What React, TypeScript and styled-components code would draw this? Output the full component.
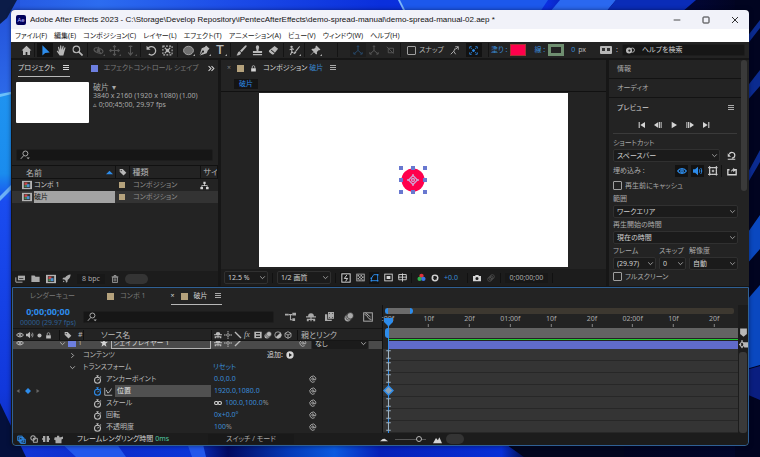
import React from "react";
import styled, { createGlobalStyle, css } from "styled-components";

const c = {
  panel: "#232323",
  gap: "#161616",
  field: "#161616",
  line: "#3a3a3a",
  text: "#aaaaaa",
  bright: "#d4d4d4",
  dim: "#7a7a7a",
  blue: "#2d8ceb",
  value: "#3a8cd8",
  sand: "#b5a27c",
  violet: "#6d7fe0",
  pink: "#ff004c",
};

const GlobalStyle = createGlobalStyle`
  *, *::before, *::after { box-sizing: border-box; }
  body {
    margin: 0;
    background: #06124a;
    font-family: "Noto Sans", "Noto Sans CJK JP", sans-serif;
    font-size: 7px;
    line-height: 12px;
    color: ${c.text};
    font-feature-settings: "palt";
  }
  button, input, select {
    font: inherit;
    color: inherit;
    background: none;
    border: 0;
    padding: 0;
    margin: 0;
    min-width: 0;
    font-feature-settings: inherit;
  }
  table { border-collapse: collapse; }
`;

/* ---------- icons (12 × 12 grid) ---------- */

const st = { fill: "none", stroke: "currentColor", strokeWidth: 1.2 };

const glyphs: Record<string, React.ReactNode> = {
  home: <path d="M6 .8 .6 6h1.6v5h2.9V7.6h1.8V11h2.9V6h1.6z" />,
  arrow: <path d="M2.6.4v11l3-2.8 5-.5z" />,
  hand: <path d="M4 11.5 1 7.2c-.5-.9.5-1.4 1.2-.7l1 1L2.2 2.6c-.1-.9 1-1 1.2-.2l.9 3L4.5 1c0-.9 1.2-.9 1.3 0l.2 4.2L7.2 1.3c.3-.8 1.3-.6 1.2.3l-.7 4 1.5-2.7c.4-.7 1.4-.3 1.1.5L8.9 8.2 8 11.5z" />,
  zoom: <g {...st}><circle cx="4.8" cy="4.8" r="3.6" /><path d="m7.5 7.5 4 4" strokeWidth="1.8" /></g>,
  orbit: <g {...st}><ellipse cx="6" cy="6" rx="5" ry="2.6" transform="rotate(20 6 6)" /><path d="M6 2v4l3 4" /><circle cx="6" cy="6" r="1.4" fill="currentColor" /></g>,
  move: <g {...st}><path d="M6 1v10M1 6h10" /><path d="M4.4 2.4 6 .8l1.6 1.6M4.4 9.6 6 11.2l1.6-1.6M2.4 4.4.8 6l1.6 1.6M9.6 4.4 11.2 6 9.6 7.6" /></g>,
  dolly: <g {...st}><path d="M6 .5V11M3.5 8 6 11l2.5-3M4 1.5h4" /></g>,
  rotate: <g><path d="M2.3 3.5A4.6 4.6 0 1 1 3 9.9" {...st} strokeWidth="1.4" /><path d="M.6.8v4.4H5z" /></g>,
  anchorBox: <g {...st} strokeDasharray="2 1.4"><rect x="1" y="1.2" width="10" height="9.6" /><path d="m3 3 6 6m0-6L3 9" strokeDasharray="none" /><circle cx="6" cy="6" r="1.3" fill="currentColor" strokeDasharray="none" /></g>,
  ellipse: <ellipse cx="6" cy="6" rx="5.4" ry="4.6" fill="#707070" stroke="#a8a8a8" />,
  pen: <path d="M7.8.5 11.5 4 9.7 5.6 8.4 9 1 11.5l2.9-3.3a1.2 1.2 0 1 0-.7-.7L.6 10.8 3 3.6 6.3 2.2z" />,
  brush: <path d="M11.3.5c.6.4.4 1-.1 1.6L6.2 8 4.4 6.3 9.8.9c.6-.6 1-.7 1.5-.4zM3.8 6.8l1.7 1.6C5.2 10.6 3.1 11.6.5 11.3c1.3-.9 1-3.8 3.3-4.5z" />,
  stamp: <path d="M4.2 2.2a1.8 1.8 0 1 1 3.6 0C7.8 3.8 7 4.2 7 6.6h4v2.2H1V6.6h4c0-2.4-.8-2.8-.8-4.4zM1 9.900h10v1.200H1z" />,
  eraser: <path d="M7.2 1 11 4.200 6.400 9.800c-.6.7-1.500.8-2.200.2L1.500 7.800c-.7-.6-.7-1.300-.1-2zM3.200 5.900l3.600 3 .6-.7-3.600-3z" fillRule="evenodd" />,
  roto: <g><path d="M11.300 1 7 6.200l1 1L12 2zM6.800 6.600l1.200 1c-.4 1.600-1.500 2.200-3.300 2.200 1-.7.8-2.500 2.100-3.200z" /><circle cx="2.800" cy="2" r="1.300" /><path d="M.7 5.200 3.400 4l1.800 1M3 4v3.500L1.500 11M3 7.300l1.800 1.200" {...st} /></g>,
  pin: <path d="M7 .6 11.400 5l-1 .8-1-.2-1.900 1.900.2 2-1 .9-2.500-2.500L.8 11.200l-.3-.4L3.900 7.400 1.500 5l1-1 2 .2L6.300 2.400 6 1.500z" />,
  axis: <g {...st}><path d="M6 6.500V1M6 6.500 1.500 10.500M6 6.500l4.500 4" /><path d="M4.800 2.200 6 .8l1.200 1.400M1 8.600v2.300h2.300M11 8.600v2.300H8.700" /></g>,
  axisBox: <g {...st}><path d="M3 3h7v6H3zM1 1l9 9" /></g>,
  snapArrow: <g {...st}><path d="m1 11 4-4 2-4M5 7l2.500 4M7 1h4v4M11 1 7.500 4.500" /></g>,
  snapBox: <g {...st}><path d="M1 3.500V1h2.500M8.500 1H11v2.500M11 8.500V11H8.500M3.500 11H1V8.500" /><path d="m3 3 1.500 1.500M9 3 7.500 4.500M3 9l1.500-1.500M9 9 7.500 7.500M6 4v4M4 6h4" /></g>,
  burger: <path d="M1.500 1.500h9V3h-9zM1.500 4.500h9V6h-9zM1.500 7.500h9V9h-9z" />,
  chevrons: <path d="m1 2 4 4-4 4M6 2l4 4-4 4" {...st} strokeWidth="1.800" />,
  lock: <g><path d="M2 5.500h8V11H2z" /><path d="M3.800 5.500V3.300a2.200 2.200 0 0 1 4.400 0v2.200" {...st} /></g>,
  search: <g {...st}><circle cx="6.500" cy="4.200" r="3" /><path d="M4.500 6.600 1 10.600" /><path d="M7.800 9h4l-2 2z" fill="currentColor" stroke="none" /></g>,
  tag: <path d="M1 1.500h4.500L11 7l-4.200 4.300L1 5.800zM3.300 3a.9.900 0 1 0 .1 1.800A.9.900 0 0 0 3.300 3z" fillRule="evenodd" />,
  tree: <path d="M4.500 1h3v3h-1v1.500H10V8h1.500v3h-3.500V8H9V6.600H3V8h1v3H.5V8H2V5.500h3.500V4h-1z" />,
  comp: <g><rect x="0" y="1" width="12" height="10" fill="#b4b4b4" /><rect x="2.200" y="2.500" width="7.600" height="7" fill="#333" /><rect x="3" y="3" width="3.500" height="3" fill="#c44" /><rect x="5.500" y="5" width="3.500" height="3.500" fill="#4a8fd0" /><rect x="3" y="6.300" width="2.500" height="2" fill="#4b9a55" /></g>,
  stack: <g><path d="M3.500 2H12v5.500H3.500z" /><path d="M1 9.500V4M1 9.800h8" {...st} /><path d="M5 5h5v1H5z" fill="#333" /></g>,
  folder: <path d="M.5 2h4.200l1.300 1.600h5.500v6.900H.5z" />,
  rocket: <path d="M11.500.5C8 .8 5.800 2.300 4.300 4.500L1.500 5 .5 7l2.600.200L5 9l.200 2.500 2-1 .4-2.800C9.900 6.200 11.200 4 11.500.5zM1 11l2.500-.8L2 8.600z" />,
  trash: <g {...st}><path d="M2.300 3.300h7.400v8H2.300zM1 2.800h10M4.500 2.500v-1.700h3v1.700M4.800 5v4.600M7.200 5v4.600" /></g>,
  chevron: <path d="m2 4 4 4 4-4" {...st} strokeWidth="1.500" />,
  chevronR: <path d="m4 2 4 4-4 4" {...st} strokeWidth="1.500" />,
  fast: <g {...st}><rect x="1" y="1" width="10" height="10" /><path d="M7 2.500 4 6.500h4L5.500 10" /></g>,
  checker: <g><rect x="1" y="1.500" width="10" height="9" {...st} /><path d="M2 2.500h2v2H2zM6 2.500h2v2H6zM4 4.500h2v2H4zM8 4.500h2v2H8zM2 6.500h2v2H2zM6 6.500h2v2H6zM4 8.500h2v1.500H4zM8 8.500h2v1.500H8z" /></g>,
  maskPath: <g {...st}><path d="M1.800 10.200V7L5 2.200h5.200v8z" /><path d="M.8 9.200h2v2h-2zM9.200 1.200h2v2h-2zM9.200 9.200h2v2h-2zM.8 6h2v2h-2z" fill="currentColor" stroke="none" /></g>,
  region: <g><rect x="1" y="1.500" width="10" height="9" {...st} /><rect x="3.500" y="4" width="5" height="4" /></g>,
  grid: <g {...st}><path d="M1 2h10v7H1zM6 .5v11M0 5.500h12" /></g>,
  rgb: <g><circle cx="6" cy="3.800" r="2.900" fill="#e0323c" /><circle cx="3.500" cy="7.800" r="2.900" fill="#2fb04a" /><circle cx="8.500" cy="7.800" r="2.900" fill="#3c74e6" /></g>,
  aperture: <g {...st} strokeWidth="2"><circle cx="6" cy="6" r="4.200" /><path d="M6 1.500 8 4M10.500 5 8.500 7.500M9 10 6 9M3.500 9.800 4 7M1.500 5 4 5" strokeWidth="1" /></g>,
  camera: <path d="M0 3h3l1-1.500h4L9 3h3v8H0zM6 4.500a2.300 2.300 0 1 0 0 4.600 2.300 2.300 0 0 0 0-4.600z" fillRule="evenodd" />,
  blurs: <g {...st}><circle cx="4" cy="8" r="3" /><circle cx="6" cy="6" r="3" /><circle cx="8" cy="4" r="3" /></g>,
  blursFill: <g><circle cx="4.500" cy="7.500" r="3.800" /><circle cx="6" cy="6" r="3.800" stroke="#232323" strokeWidth=".7" /><circle cx="7.500" cy="4.500" r="3.800" stroke="#232323" strokeWidth=".7" /></g>,
  first: <path d="M1 1.500h1.600v9H1zM10.500 1.500v9L3.500 6z" />,
  prev: <path d="M6.500 1.500v9L0 6zM7.500 1.500h1.400v9H7.500zM10 1.500h1.400v9H10z" />,
  play: <path d="M2.500 1v10l8-5z" />,
  next: <path d="M5.500 1.500v9L12 6zM3.100 1.500h1.400v9H3.100zM.6 1.500H2v9H.6z" />,
  last: <path d="M9.400 1.500H11v9H9.400zM1.500 1.500v9L8.500 6z" />,
  eye: <g {...st} strokeWidth="1.500"><path d="M.8 6C3 2.300 9 2.300 11.200 6 9 9.700 3 9.700.8 6z" /><circle cx="6" cy="6" r="1.500" /></g>,
  speaker: <g><path d="M0 4h2.500L6 1v10L2.500 8H0z" /><path d="M7.500 4c.8 1.200.8 2.800 0 4M9.300 2.500c1.500 2 1.500 5 0 7" {...st} /></g>,
  overlay: <g {...st}><rect x="2" y="2" width="8" height="8" /><path d="M0 2h12M0 10h12M2 0v12M10 0v12" strokeDasharray="1.500 1" /><path d="M6 4.500v3M4.500 6h3" /></g>,
  reset: <g><path d="M3 4.500A3.800 3.800 0 1 1 6.500 9.500" {...st} strokeWidth="1.600" /><path d="M1 3v4.500h4.300zM1 10.200h10v1.300H1z" /></g>,
  share: <g><path d="M3 4.500H1v6h10v-6H9" {...st} strokeWidth="1.600" /><path d="M5 8c0-3 .5-4 2.500-4V2l3 2.800-3 2.700v-2C6 5.500 5.500 6.500 5 8z" /></g>,
  flow: <g><path d="M0 3h4v2H0zM8 2h4v3H8zM8 8h3v3H8z" /><path d="M4 4h4M6 4v5.500h2" {...st} /></g>,
  shy: <path d="M2.500 5a3.500 3.500 0 0 1 7 0H12v1.500H6.700V8H11v3H8.700V9.500h-2V11H5.300V9.500h-2V11H1V8h4.300V6.500H0V5z" />,
  film: <path d="M4 0h8v9H4zM5.200 1.200v1.200h1.200V1.200zM9.600 1.200v1.200h1.200V1.200zM5.200 6.600v1.200h1.200V6.600zM9.600 6.600v1.200h1.200V6.600zM0 3h3v7.200h6V12H0z" fillRule="evenodd" />,
  graph: <g {...st}><rect x=".8" y="1" width="10.400" height="10" /><path d="M2 3c4 0 3 6 8 6M3 1l6 5" /></g>,
  dot: <circle cx="6" cy="6" r="3.500" />,
  sun: <g><circle cx="6" cy="6" r="2" {...st} /><path d="M5.300 0h1.400v2.400H5.300zM5.300 9.600h1.400V12H5.300zM0 5.300h2.400v1.400H0zM9.600 5.300H12v1.400H9.600z" /></g>,
  slash: <path d="m1.500 1.500 9 9" {...st} strokeWidth="2" />,
  slashUp: <path d="m1.500 10.500 9-9" {...st} strokeWidth="2" />,
  filmBox: <path d="M.5 1h11v10H.5zM3 3v2h6V3zM3 7v2h6V7z" fillRule="evenodd" />,
  half: <g><circle cx="6" cy="6" r="4.800" {...st} /><path d="M9.400 2.600a4.800 4.800 0 0 1-6.800 6.800z" /></g>,
  cube: <g {...st}><path d="M6 1 10.500 3.500v5L6 11 1.500 8.500v-5zM1.500 3.500 6 6l4.500-2.500M6 6v5" /></g>,
  star: <path d="m6 0 1.500 4.200H12L8.400 7l1.400 4.700L6 9l-3.800 2.700L3.600 7 0 4.200h4.500z" />,
  watch: <g {...st} strokeWidth="1.400"><circle cx="6" cy="7" r="4" /><path d="M4.500.9h3M6 1v2M6 7l1.500-1.500M9.500 2l1.200 1.200" /></g>,
  curve: <path d="M1 1v10h10M3 4l2 4 2-1 3-5" {...st} />,
  whip: <path d="M7.500 6A1.700 1.700 0 1 1 6 4.300c1.600 0 1.600 3.700 3 3.500 1.300-.3 1.500-2.500.8-4A4.600 4.600 0 1 0 8.500 10" {...st} strokeWidth="1.300" />,
  link: <g {...st} strokeWidth="1.600"><rect x=".8" y="3.800" width="5.200" height="4.400" rx="2.200" /><rect x="6" y="3.800" width="5.200" height="4.400" rx="2.200" /></g>,
  diamond: <path d="m6 1.500 4.500 4.500L6 10.500 1.500 6z" />,
  left: <path d="M9 2v8L3 6z" />,
  right: <path d="M3 2v8l6-4z" />,
  up: <path d="M0 9 6 3l6 6z" />,
  circlePlay: <path d="M6 .5a5.500 5.500 0 1 0 0 11 5.500 5.500 0 0 0 0-11zM4.500 3v6L9 6z" fillRule="evenodd" />,
  layers: <g {...st}><path d="M1 1.500h6v6H1zM3 3.500h6v6H3zM5 5.500h6v6H5z" strokeWidth="1.300" /></g>,
  circles: <g {...st} strokeWidth="1.600"><circle cx="4.500" cy="4.500" r="3.300" /><rect x="5" y="5" width="6" height="6" rx="1" /></g>,
  brackets: <path d="M1.500 1.500H5v9H1.500V7H0V5h1.500zM7 1.500h3.500V5H12v2h-1.500v3.500H7z" />,
  teapot: <path d="M1 3h3V1h3v2h2l3-1v3L10 6v5H2V7L0 6z" />,
  hillS: <path d="M0 9.500 4 6l3-.5L12 9.500z" />,
  hillL: <path d="M0 11 4 4l2.500 3L8.500 3 12 11z" />,
  marker: <path d="M1.500.5h9V8L6 11.500 1.500 8z" />,
  bin: <g><path d="M5 3h7v7H7z" /><path d="M4 2 1 6l3 4 3-4zM4 0v3M0 6h3" {...st} strokeWidth="1.500" /></g>,
  ibeam: <path d="M3 1h6M3 11h6M6 1v10" fill="none" stroke="#9fb4c4" strokeWidth="1.400" />,
  bubbles: <g><rect x="0" y="2" width="12" height="8" rx="1" /><path d="M2 4h3v3H2zM7 4h3v3H7z" fill="#333" /></g>,
  magnify: <g><circle cx="4" cy="6" r="4" /><circle cx="8.500" cy="5.500" r="2.800" {...st} /><circle cx="4.500" cy="6" r="1.500" fill="#222" /></g>,
  min: <path d="M1 6h10" {...st} />,
  max: <rect x="1.500" y="1.500" width="9" height="9" rx="1" {...st} strokeWidth="1.400" />,
  close: <path d="m1.500 1.500 9 9m0-9-9 9" {...st} strokeWidth="1.400" />,
};

const Svg = styled.svg<{ $s: number; $c?: string }>`
  display: block;
  flex: none;
  width: ${(p) => p.$s}px;
  height: ${(p) => p.$s}px;
  color: ${(p) => p.$c || "inherit"};
  fill: currentColor;
`;
const Icon = ({ n, s = 8, color }: { n: string; s?: number; color?: string }) => (
  <Svg viewBox="0 0 12 12" $s={s} $c={color} aria-hidden="true">{glyphs[n]}</Svg>
);

/* ---------- desktop and window frame ---------- */

const Desktop = styled.div`
  position: relative;
  min-height: 100vh;
  padding: 10px 11px 11px;
  display: flex;
  overflow: hidden;
`;
const Wallpaper = styled.svg`
  position: absolute;
  inset: 0;
  width: 100%;
  height: 100%;
`;
const AppWindow = styled.main`
  position: relative;
  flex: 1;
  min-width: 0;
  display: flex;
  flex-direction: column;
  background: ${c.gap};
  border-radius: 4px;
  overflow: hidden;
  box-shadow: 0 0 4px rgba(0, 0, 20, 0.5);
`;
const TitleBar = styled.header`
  display: flex;
  align-items: center;
  height: 19px;
  padding: 0 10px 0 5px;
  gap: 4px;
  background: #f1f2f9;
  color: #222;
  white-space: nowrap;
`;
const AeBadge = styled.span`
  width: 10px;
  height: 10px;
  border-radius: 2px;
  background: #00005b;
  color: #b9b9ff;
  font-size: 6px;
  line-height: 10px;
  text-align: center;
`;
const Title = styled.h1`
  margin: 0;
  flex: 1;
  min-width: 0;
  overflow: hidden;
  color: #111;
  font-family: "Liberation Sans", sans-serif;
  font-size: 8px;
  font-weight: 400;
`;
const Captions = styled.div`
  display: flex;
  gap: 21px;
`;
const Bare = styled.button<{ $w?: number; $on?: boolean; $dim?: boolean }>`
  display: flex;
  align-items: center;
  justify-content: center;
  flex: none;
  height: 12px;
  width: ${(p) => (p.$w ? p.$w + "px" : "auto")};
  background: ${(p) => (p.$on ? "#121212" : "none")};
  ${(p) => p.$dim && css`opacity: 0.35;`}
`;
const MenuBar = styled.nav`
  display: flex;
  align-items: center;
  height: 13px;
  padding: 0 4px;
  gap: 7px;
  background: #fff;
  color: #222;
  white-space: nowrap;
`;

/* ---------- toolbar ---------- */

const ToolBar = styled.div`
  display: flex;
  align-items: center;
  height: 16px;
  padding: 0 4px 0 7px;
  background: ${c.panel};
  color: #b8b8b8;
  white-space: nowrap;
`;
const ToolGroup = styled.div<{ $gap?: number }>`
  display: flex;
  align-items: center;
  flex: none;
  height: 14px;
  padding: 0 2px;
  border-left: 1px solid #141414;
  gap: ${(p) => p.$gap || 0}px;
  &:first-child { border-left: 0; padding: 0; }
`;
const PlainGroup = styled(ToolGroup)`
  border-left: 0;
  padding: 0;
`;
const ToolButton = styled(Bare)`
  position: relative;
  width: 16px;
  height: 14px;
`;
const Corner = styled.i`
  position: absolute;
  right: 1px;
  bottom: 1px;
  border: 1px solid transparent;
  border-right-color: #aaa;
  border-bottom-color: #aaa;
`;
const Spring = styled.div`
  flex: 1 1 0;
`;
const Gap = styled.div<{ $w: number }>`
  flex: none;
  width: ${(p) => p.$w}px;
`;
const Swatch = styled.button<{ $stroke?: boolean }>`
  width: 16px;
  height: 12px;
  background: ${(p) => (p.$stroke ? "#222" : c.pink)};
  border: ${(p) => (p.$stroke ? "3px solid #6f8f70" : "1px solid #a33")};
`;
const Blue = styled.span`
  color: ${c.value};
`;
const Lit = styled.span`
  color: ${c.bright};
`;
const CheckLabel = styled.label<{ $h?: number }>`
  display: flex;
  align-items: center;
  gap: 3px;
  height: ${(p) => p.$h || 12}px;
  white-space: nowrap;
`;
const Check = styled.input.attrs({ type: "checkbox" })`
  appearance: none;
  flex: none;
  width: 9px;
  height: 9px;
  border: 1px solid #a0a0a0;
  border-radius: 1px;
`;
const SearchField = styled.label<{ $w?: number }>`
  display: flex;
  align-items: center;
  flex: none;
  gap: 7px;
  height: 12px;
  padding: 0 3px;
  width: ${(p) => (p.$w ? p.$w + "px" : "auto")};
  background: ${c.field};
  border: 1px solid #1d1d1d;
  border-radius: 2px;
  input {
    flex: 1;
    width: 0;
    height: 10px;
    outline: none;
  }
  input::placeholder { color: #d0d0d0; opacity: 1; }
`;

/* ---------- panels ---------- */

const Workspace = styled.div`
  flex: 1;
  min-height: 0;
  display: grid;
  grid-template-columns: 206px minmax(0, 1fr) 140px;
  gap: 3px;
  padding: 2px 0 1px 1px;
`;
const Panel = styled.section`
  display: flex;
  flex-direction: column;
  min-width: 0;
  min-height: 0;
  overflow: hidden;
  background: ${c.panel};
`;
const Tabs = styled.div`
  display: flex;
  align-items: center;
  flex: none;
  height: 17px;
  white-space: nowrap;
`;
const Tab = styled.div<{ $on?: boolean; $pad?: number }>`
  display: flex;
  align-items: center;
  gap: 6px;
  height: 16px;
  margin-left: ${(p) => p.$pad || 0}px;
  color: ${(p) => (p.$on ? c.bright : c.dim)};
  border-bottom: ${(p) => (p.$on ? "1px solid #b8b8b8" : "1px solid transparent")};
`;
const ColorChip = styled.i<{ $c: string; $s?: number }>`
  flex: none;
  width: ${(p) => p.$s || 7}px;
  height: ${(p) => p.$s || 7}px;
  background: ${(p) => p.$c};
`;
const CompInfo = styled.div`
  display: flex;
  flex: none;
  gap: 4px;
  padding: 5px 4px 26px;
  line-height: 9px;
  white-space: nowrap;
  color: #a8a8a8;
`;
const Thumb = styled.div`
  width: 73px;
  height: 41px;
  background: #fff;
  border-radius: 1px;
`;
const InfoTitle = styled.div`
  display: flex;
  align-items: center;
  gap: 3px;
  font-size: 8px;
`;
const SearchWrap = styled.div`
  padding: 0 5px 4px 4px;
`;
const Table = styled.table`
  width: 100%;
  table-layout: fixed;
  th, td {
    height: 12px;
    padding: 0;
    font-weight: 400;
    text-align: left;
    white-space: nowrap;
    overflow: hidden;
  }
  th {
    font-size: 8px;
    color: #b8b8b8;
    border: 1px solid #111;
    border-left: 0;
  }
  th + th { padding-left: 3px; }
  td:nth-child(2), td:nth-child(3) { padding-left: 4px; }
  td { color: #8e8e8e; }
`;
const ItemRow = styled.tr<{ $on?: boolean }>`
  background: ${(p) => (p.$on ? "#333" : "none")};
`;
const NameCell = styled.div<{ $on?: boolean }>`
  display: flex;
  align-items: center;
  gap: 2px;
  padding-left: 10px;
  color: #c8c8c8;
  span {
    flex: 1;
    ${(p) => p.$on && css`background: #a3a3a3; color: #101010;`}
  }
`;
const HeadCell = styled.div`
  display: flex;
  align-items: center;
  justify-content: space-between;
  padding: 0 2px 0 14px;
  line-height: 11px;
`;
const PanelFooter = styled.div<{ $gap?: number; $h?: number }>`
  display: flex;
  align-items: center;
  flex: none;
  gap: ${(p) => p.$gap || 7}px;
  height: ${(p) => p.$h || 15}px;
  padding: 0 3px;
  background: #1c1c1c;
  white-space: nowrap;
`;
const Pill = styled.i<{ $w: number }>`
  width: ${(p) => p.$w}px;
  height: 10px;
  border-radius: 5px;
  background: #343434;
`;
const Depth = styled.button<{ $w: number }>`
  width: ${(p) => p.$w}px;
  height: 10px;
  line-height: 10px;
  background: #181818;
`;

/* ---------- composition viewer ---------- */

const Crumbs = styled.div`
  flex: none;
  height: 15px;
  padding: 2px 13px 0;
  border-bottom: 1px solid #111;
  button {
    display: block;
    width: 24px;
    height: 10px;
    line-height: 10px;
    background: #141414;
    color: ${c.blue};
  }
`;
const Viewer = styled.div`
  flex: 1;
  min-height: 0;
  padding: 1px 0 2px;
  display: flex;
  justify-content: center;
`;
const Canvas = styled.div`
  height: 100%;
  aspect-ratio: 16 / 9;
  background: #fff;
  display: flex;
  align-items: center;
  justify-content: center;
`;
const Divider = styled.i<{ $h?: number }>`
  flex: none;
  width: 1px;
  height: ${(p) => p.$h || 10}px;
  background: #111;
`;

/* ---------- preview panel ---------- */

const Side = styled(Panel)`
  display: grid;
  grid-template-columns: minmax(0, 1fr) 8px;
`;
const SideBody = styled.div`
  min-width: 0;
`;
const SideTab = styled.button`
  display: flex;
  align-items: center;
  justify-content: space-between;
  width: 100%;
  height: 19px;
  padding: 0 6px 0 8px;
  border-bottom: 1px solid #131313;
`;
const Heading = styled(SideTab)`
  border: 0;
  color: ${c.bright};
`;
const Transport = styled.div`
  display: flex;
  justify-content: center;
  gap: 7px;
  height: 17px;
  margin: 0 4px;
  padding-right: 2px;
  align-items: center;
  color: ${c.bright};
  border-bottom: 1px solid ${c.line};
`;
const Form = styled.div`
  padding: 2px 3px 0 4px;
`;
const Field = styled.label<{ $w?: number }>`
  display: block;
  min-width: 0;
  flex: ${(p) => (p.$w ? `0 0 ${p.$w}px` : "1")};
  line-height: 13px;
  white-space: nowrap;
`;
const Line = styled.div<{ $gap?: number; $h?: number }>`
  display: flex;
  align-items: center;
  justify-content: space-between;
  gap: ${(p) => p.$gap || 0}px;
  min-height: ${(p) => p.$h || 13}px;
`;
const SelectBox = styled.span<{ $w?: number }>`
  position: relative;
  display: flex;
  flex: ${(p) => (p.$w ? "none" : "1")};
  width: ${(p) => (p.$w ? p.$w + "px" : "auto")};
  height: 13px;
  align-items: center;
  select {
    appearance: none;
    width: 100%;
    height: 13px;
    padding: 0 9px 0 3px;
    line-height: 11px;
    color: #d0d0d0;
    background: #1b1b1b;
    border: 1px solid #303030;
    border-radius: 2px;
    text-overflow: clip;
  }
  svg {
    position: absolute;
    right: 2px;
    pointer-events: none;
  }
`;
const Select = ({ v, w, label }: { v: string; w?: number; label: string }) => (
  <SelectBox $w={w}>
    <select aria-label={label} defaultValue={v}><option>{v}</option></select>
    <Icon n="chevron" s={7} />
  </SelectBox>
);
const ButtonRow = styled.div`
  display: flex;
  gap: 3px;
  color: ${c.bright};
`;
const ScrollThumb = styled.i<{ $h: string }>`
  display: block;
  width: 6px;
  height: ${(p) => p.$h};
  border-radius: 3px;
  background: #3a3a3a;
`;

/* ---------- timeline ---------- */

const Timeline = styled.section`
  flex: none;
  display: flex;
  flex-direction: column;
  margin-left: 1px;
  background: ${c.panel};
  border: 1px solid #2f6094;
  border-radius: 0 0 4px 4px;
`;
const Split = styled.div`
  display: grid;
  grid-template-columns: 370px minmax(0, 1fr) 10px;
`;
const Column = styled.div`
  position: relative;
  min-width: 0;
  display: flex;
  flex-direction: column;
`;
const Outline = styled(Column)`
  border-right: 1px solid #111;
`;
const TimeTools = styled.div`
  display: flex;
  align-items: center;
  height: 23px;
  padding: 0 9px 0 5px;
  gap: 5px;
`;
const TimeIcons = styled.div`
  display: flex;
  flex: 1;
  justify-content: space-between;
  margin-left: 6px;
`;
const TimeCode = styled.button`
  flex: none;
  width: 60px;
  line-height: 9px;
  color: #2c5f94;
  strong {
    display: block;
    font-size: 9px;
    line-height: 12px;
    color: ${c.blue};
  }
`;
const LayerGrid = styled.div<{ $head?: boolean; $on?: boolean }>`
  display: grid;
  grid-template-columns: 46px 24px minmax(0, 1fr) 86px 85px;
  align-items: center;
  flex: none;
  height: ${(p) => (p.$head ? 13 : 12)}px;
  white-space: nowrap;
  color: #bababa;
  background: ${(p) => (p.$on ? "#4a4a4a" : "none")};
  ${(p) => p.$head && css`
    border-top: 1px solid #161616;
    border-bottom: 1px solid #161616;
  `}
`;
const Cell = styled.div<{ $gap?: number; $pad?: number; $end?: boolean; $rule?: boolean }>`
  display: flex;
  align-items: center;
  min-width: 0;
  gap: ${(p) => p.$gap || 0}px;
  padding-left: ${(p) => p.$pad || 0}px;
  justify-content: ${(p) => (p.$end ? "flex-end" : "flex-start")};
  height: 12px;
  ${(p) => p.$rule && css`height: 10px; border-left: 1px solid #111;`}
`;
const Clip = styled.div`
  display: flex;
  flex-direction: column;
  justify-content: flex-end;
  height: 8px;
  overflow: hidden;
`;
const LayerName = styled.span`
  flex: 1;
  height: 12px;
  line-height: 10px;
  padding-left: 1px;
  border: 1px solid #b4b4b4;
  color: ${c.bright};
`;
const HeadText = styled.span`
  font-size: 8px;
  line-height: 10px;
`;
const PropName = styled.span<{ $on?: boolean }>`
  padding: 0 2px;
  ${(p) => p.$on && css`flex: 1; background: #505050; color: #e0e0e0;`}
`;
const Value = styled.button`
  color: ${c.value};
`;
const Unit = styled.span`
  color: #909090;
`;
const Add = styled.button`
  display: flex;
  align-items: center;
  gap: 3px;
  padding-right: 3px;
  color: ${c.bright};
`;
const Navigator = styled.div`
  display: flex;
  height: 6px;
  margin: 3px 4px 0 2px;
  background: #3d3830;
  border-radius: 0 2px 2px 0;
`;
const NavView = styled.div`
  width: 28px;
  background: #6b6b6b;
  border: solid ${c.blue};
  border-width: 0 3px;
  border-radius: 3px;
`;
const Ruler = styled.div`
  position: relative;
  height: 14px;
  margin-left: 5px;
  line-height: 10px;
`;
const Tick = styled.span`
  position: absolute;
  top: 0;
  height: 13px;
  transform: translateX(-50%);
  &::after {
    content: "";
    display: block;
    width: 1px;
    height: 3px;
    margin: 0 auto;
    background: #888;
  }
`;
const WorkArea = styled.div`
  height: 10px;
  margin-left: 2px;
  background: #636363;
  border-left: 3px solid ${c.blue};
  border-radius: 3px 0 0 3px;
`;
const RenderedBar = styled.div`
  height: 1px;
  margin: 1px 0 1px 5px;
  background: #22c932;
`;
const LayerBar = styled.div`
  height: 8px;
  margin-left: 5px;
  background: #606bc9;
`;
const Track = styled.div`
  height: 12px;
  background: #343434;
  border-bottom: 1px solid #272727;
  display: flex;
  align-items: center;
`;
const Playhead = styled.svg`
  position: absolute;
  left: 0;
  top: 13px;
  width: 11px;
  height: calc(100% - 13px);
`;
const KeySlot = styled.span`
  position: relative;
  z-index: 1;
  width: 11px;
  display: flex;
  justify-content: center;
`;
const Rail = styled(Column)`
  align-items: center;
  padding-top: 23px;
  gap: 3px;
  color: #b8b8b8;
  background: #1c1c1c;
`;
const RailThumb = styled(ScrollThumb)`
  width: 8px;
  flex: 1;
`;
const Status = styled(PanelFooter)`
  padding: 0 4px;
  border-radius: 0 0 4px 4px;
`;
const StatusText = styled.span`
  flex: none;
  width: 137px;
  padding-left: 10px;
  color: #d0d0d0;
  em { font-style: normal; color: #4fc9a0; }
`;
const Mode = styled.button`
  width: 86px;
  height: 10px;
  line-height: 10px;
  margin-right: 82px;
  background: #191919;
`;
const ZoomRange = styled.input.attrs({ type: "range" })`
  appearance: none;
  width: 31px;
  height: 8px;
  margin: 0 3px;
  background: linear-gradient(#555, #555) center / 100% 1px no-repeat;
  &::-webkit-slider-thumb {
    appearance: none;
    width: 6px;
    height: 6px;
    border: 1px solid #b8b8b8;
    border-radius: 50%;
    background: #1c1c1c;
  }
`;

/* ---------- data ---------- */

const menus = ["ファイル(F)", "編集(E)", "コンポジション(C)", "レイヤー(L)", "エフェクト(T)", "アニメーション(A)", "ビュー(V)", "ウィンドウ(W)", "ヘルプ(H)"];

type Tool = { n: string; l: string; on?: boolean; dim?: boolean; more?: boolean };
const toolGroups: Tool[][] = [
  [{ n: "home", l: "ホーム" }],
  [{ n: "arrow", l: "選択", on: true }, { n: "hand", l: "手のひら" }, { n: "zoom", l: "ズーム" }],
  [{ n: "orbit", l: "周回", dim: true, more: true }, { n: "move", l: "パン", dim: true, more: true }, { n: "dolly", l: "ドリー", dim: true, more: true }],
  [{ n: "rotate", l: "回転" }, { n: "anchorBox", l: "アンカーポイント" }],
  [{ n: "ellipse", l: "楕円形", more: true }, { n: "pen", l: "ペン", more: true }, { n: "text", l: "文字", more: true }],
  [{ n: "brush", l: "ブラシ" }, { n: "stamp", l: "スタンプ" }, { n: "eraser", l: "消しゴム" }],
  [{ n: "roto", l: "ロトブラシ", more: true }],
  [{ n: "pin", l: "パペットピン", more: true }],
];
const TypeGlyph = styled.span`
  font-family: Roboto, sans-serif;
  font-size: 13px;
  font-weight: 500;
`;

const tickLabels = [":00f", "10f", "20f", "01:00f", "10f", "20f", "02:00f", "10f", "20f"];
const tickStep = 11.65;

type Prop = { name: string; value: string; unit?: string; on?: boolean; link?: boolean };
const props: Prop[] = [
  { name: "アンカーポイント", value: "0.0,0.0" },
  { name: "位置", value: "1920.0,1080.0", on: true },
  { name: "スケール", value: "100.0,100.0", unit: "%", link: true },
  { name: "回転", value: "0x+0.0°" },
  { name: "不透明度", value: "100", unit: "%" },
];

/* ---------- parts ---------- */

const DesktopArt = () => (
  <Wallpaper viewBox="0 0 760 457" preserveAspectRatio="none" aria-hidden="true">
    <defs>
      <linearGradient id="top" x1="0" x2="1">
        <stop offset="0" stopColor="#2456e0" /><stop offset=".13" stopColor="#2c6cf0" />
        <stop offset=".3" stopColor="#1c4ce8" /><stop offset=".5" stopColor="#0a2fdc" />
        <stop offset=".72" stopColor="#0b2ee0" /><stop offset=".8" stopColor="#030a58" /><stop offset="1" stopColor="#010318" />
      </linearGradient>
      <linearGradient id="left" x1="0" x2="0" y1="0" y2="1">
        <stop offset="0" stopColor="#2350d8" /><stop offset=".2" stopColor="#2c68e8" /><stop offset=".21" stopColor="#1f93f0" />
        <stop offset=".38" stopColor="#1a8cee" /><stop offset=".44" stopColor="#1a4cf0" /><stop offset=".85" stopColor="#1138dc" /><stop offset="1" stopColor="#0c2cb8" />
      </linearGradient>
      <linearGradient id="bottom" x1="0" x2="1">
        <stop offset="0" stopColor="#1238d8" /><stop offset=".15" stopColor="#0c2ccc" /><stop offset=".25" stopColor="#0a36d8" />
        <stop offset=".3" stopColor="#020a60" /><stop offset=".38" stopColor="#043ab8" /><stop offset=".44" stopColor="#0a5ae0" />
        <stop offset=".5" stopColor="#0620b8" /><stop offset=".66" stopColor="#0730d8" /><stop offset=".7" stopColor="#010318" /><stop offset="1" stopColor="#01062c" />
      </linearGradient>
    </defs>
    <rect width="760" height="228" fill="url(#top)" />
    <rect y="228" width="760" height="229" fill="url(#bottom)" />
    <rect width="20" height="457" fill="url(#left)" />
    <path d="M0 0h17L7 18l-7 6z" fill="#0b1c48" />
    <path d="M0 196 20 176v5L0 201z" fill="#6cb0f6" />
    <path d="M0 94 20 90v2L0 97z" fill="#6cc0fa" />
    <path d="M0 403 26 457H0z" fill="#04103c" />
    <path d="M398 0h150l-8 12H404z" fill="#1c58ec" />
    <path d="M398 0h2l6 12h-2z" fill="#7ab6fa" />
    <path d="M560 0h56l-10 12h-56z" fill="#2a68f0" />
    <path d="M616 0h80l-14 12h-76z" fill="#0a2cb8" />
    <path d="M735 0h25v457h-25z" fill="#010420" />
    <path d="m760 20-14 18v8l14-18zM760 70l-14 18v14l14-16zM760 150l-14 26v10l14-24z" fill="#0b2b90" />
    <path d="m760 215-14 20v30l14-16zM760 285l-14 16v68l14-4z" fill="#0a48c0" />
    <path d="m760 366-14 4v24l14 6z" fill="#0a1e80" />
    <path d="m58 440 18 17h50l-12-17zM186 440l6 17h14l-4-17z" fill="#2258ec" />
    <path d="m500 440 24 17h100v-17z" fill="#02061e" />
  </Wallpaper>
);

const Handles = () => {
  const pts = [0, 12, 24].flatMap((x) => [0, 12, 24].map((y) => [x, y])).filter(([x, y]) => x !== 12 || y !== 12);
  return (
    <svg width="30" height="30" viewBox="0 0 30 30" role="img" aria-label="破片">
      <circle cx="15" cy="15" r="11.500" fill={c.pink} />
      <g fill="none" stroke="#d0a0d0" strokeWidth="1.300">
        <path d="M15 10.500 19.500 15 15 19.500 10.500 15z" />
        <path d="M15 9v3M15 18v3M9 15h3M18 15h3" />
        <circle cx="15" cy="15" r="1.500" />
      </g>
      {pts.map(([x, y]) => <rect key={`${x}-${y}`} x={x + 1} y={y + 1} width="4" height="4" fill="#6878d0" />)}
    </svg>
  );
};

const ProjectPanel = () => (
  <Panel>
    <Tabs>
      <Tab $on $pad={6}>プロジェクト<Icon n="burger" s={8} /></Tab>
      <Tab $pad={21}><ColorChip $c={c.violet} />エフェクトコントロール シェイプ</Tab>
      <Spring />
      <Bare $w={14} aria-label="その他のタブ"><Icon n="chevrons" s={7} color={c.bright} /></Bare>
    </Tabs>
    <CompInfo>
      <Thumb />
      <div>
        <InfoTitle>破片 <span>▾</span></InfoTitle>
        <div>3840 x 2160 (1920 x 1080) (1.00)</div>
        <div>▵ 0;00;45;00, 29.97 fps</div>
      </div>
    </CompInfo>
    <SearchWrap>
      <SearchField><Icon n="search" s={10} /><input aria-label="プロジェクトを検索" /></SearchField>
    </SearchWrap>
    <Table>
      <colgroup><col width="103" /><col width="14" /><col width="71" /><col /></colgroup>
      <thead>
        <tr>
          <th><HeadCell>名前<Icon n="up" s={7} color={c.blue} /></HeadCell></th>
          <th aria-label="ラベル"><Icon n="tag" s={8} /></th>
          <th>種類</th>
          <th>サイ</th>
        </tr>
      </thead>
      <tbody>
        {["コンポ 1", "破片"].map((name, i) => (
          <ItemRow key={name} $on={i === 1}>
            <td><NameCell $on={i === 1}><Icon n="comp" s={10} /><span>{name}</span></NameCell></td>
            <td><ColorChip as="div" $c={c.sand} $s={6} /></td>
            <td>コンポジション</td>
            <td>{i === 0 && <Icon n="tree" s={9} color={c.bright} />}</td>
          </ItemRow>
        ))}
      </tbody>
    </Table>
    <Spring />
    <PanelFooter $gap={6}>
      <Bare aria-label="フッテージを変換"><Icon n="stack" s={10} /></Bare>
      <Bare aria-label="新規フォルダー"><Icon n="folder" s={9} /></Bare>
      <Bare aria-label="新規コンポジション"><Icon n="comp" s={10} /></Bare>
      <Bare aria-label="設定"><Icon n="rocket" s={9} /></Bare>
      <Depth $w={28}>8 bpc</Depth>
      <Bare aria-label="削除"><Icon n="trash" s={8} /></Bare>
      <Pill $w={23} />
    </PanelFooter>
  </Panel>
);

const CompositionPanel = () => (
  <Panel>
    <Tabs>
      <Tab $pad={6}>
        <span>×</span><ColorChip $c={c.sand} /><Icon n="lock" s={7} color={c.bright} />
      </Tab>
      <Tab $pad={6}>
        <Lit>コンポジション <Blue>破片</Blue></Lit><Icon n="burger" s={8} color={c.text} />
      </Tab>
    </Tabs>
    <Crumbs><button>破片</button></Crumbs>
    <Viewer><Canvas><Handles /></Canvas></Viewer>
    <PanelFooter $gap={4} $h={17}>
      <Select v="12.5 %" w={44} label="拡大率" />
      <Divider />
      <Select v="1/2 画質" w={54} label="解像度" />
      <Divider />
      <Bare $w={11} $on aria-label="高速プレビュー"><Icon n="fast" s={10} color={c.bright} /></Bare>
      <Bare $w={10} aria-label="透明グリッド"><Icon n="checker" s={9} /></Bare>
      <Bare $w={10} $on aria-label="マスクとシェイプのパス"><Icon n="maskPath" s={9} color={c.blue} /></Bare>
      <Bare $w={10} aria-label="目標範囲"><Icon n="region" s={9} color={c.bright} /></Bare>
      <Bare $w={10} aria-label="グリッド"><Icon n="grid" s={9} color={c.bright} /></Bare>
      <Divider />
      <Bare $w={10} aria-label="チャンネル"><Icon n="rgb" s={9} /></Bare>
      <Bare $w={10} aria-label="露出をリセット"><Icon n="aperture" s={8} color={c.bright} /></Bare>
      <Value>+0.0</Value>
      <Gap $w={1} />
      <Divider />
      <Bare $w={10} aria-label="スナップショット"><Icon n="camera" s={8} color={c.bright} /></Bare>
      <Bare $w={10} $dim aria-label="スナップショットを表示"><Icon n="blurs" s={8} /></Bare>
      <Divider />
      <Depth $w={43}>0;00;00;00</Depth>
      <Divider />
    </PanelFooter>
  </Panel>
);

const transport = [["first", "先頭"], ["prev", "前のフレーム"], ["play", "再生"], ["next", "次のフレーム"], ["last", "最後"]];

const PreviewPanel = () => (
  <Side>
    <SideBody>
      <SideTab>情報</SideTab>
      <SideTab>オーディオ</SideTab>
      <Heading>プレビュー<Icon n="burger" s={8} color={c.text} /></Heading>
      <Transport>
        {transport.map(([n, l]) => <Bare key={n} $w={9} aria-label={l}><Icon n={n} s={8} /></Bare>)}
      </Transport>
      <Form>
        <Field as="div">ショートカット</Field>
        <Line $gap={4}>
          <Select v="スペースバー" label="ショートカット" />
          <Bare $w={14} aria-label="リセット"><Icon n="reset" s={9} color={c.bright} /></Bare>
        </Line>
        <Line $h={17}>
          <Field as="div">埋め込み :</Field>
          <ButtonRow>
            <Bare $w={13} $on aria-label="ビデオ"><Icon n="eye" s={10} color={c.blue} /></Bare>
            <Bare $w={13} $on aria-label="オーディオ"><Icon n="speaker" s={10} color={c.blue} /></Bare>
            <Bare $w={11} aria-label="オーバーレイ"><Icon n="overlay" s={10} /></Bare>
            <Divider $h={12} />
            <Bare $w={13} aria-label="書き出し"><Icon n="share" s={10} /></Bare>
          </ButtonRow>
        </Line>
        <CheckLabel $h={13}><Check />再生前にキャッシュ</CheckLabel>
        <Field>範囲<Select v="ワークエリア" label="範囲" /></Field>
        <Field>再生開始の時間<Select v="現在の時間" label="再生開始の時間" /></Field>
        <Line $gap={3}>
          <Field $w={43}>フレーム<Select v="(29.97)" label="フレームレート" /></Field>
          <Field $w={27}>スキップ<Select v="0" label="スキップ" /></Field>
          <Field>解像度<Select v="自動" label="解像度" /></Field>
        </Line>
        <CheckLabel $h={13}><Check />フルスクリーン</CheckLabel>
      </Form>
    </SideBody>
    <ScrollThumb $h="58%" />
  </Side>
);

const switches = ["shy", "sun", "slash", "fx", "filmBox", "blursFill", "half", "cube"];
const Fx = styled.i`
  width: 8px;
  font: italic 8px/10px "Liberation Serif", serif;
`;

const TimelinePanel = () => (
  <Timeline>
    <Tabs>
      <Tab $pad={17}>レンダーキュー</Tab>
      <Tab $pad={32}><ColorChip $c={c.sand} />コンポ 1</Tab>
      <Tab $on $pad={25}><span>×</span><ColorChip $c={c.sand} />破片<Icon n="burger" s={8} color={c.text} /></Tab>
    </Tabs>
    <Split>
      <Outline>
        <TimeTools>
          <TimeCode><strong>0;00;00;00</strong>00000 (29.97 fps)</TimeCode>
          <SearchField $w={191}><Icon n="search" s={10} /><input aria-label="レイヤーを検索" /></SearchField>
          <TimeIcons>
            <Bare aria-label="フローチャート"><Icon n="flow" s={11} /></Bare>
            <Bare aria-label="シャイ"><Icon n="shy" s={10} /></Bare>
            <Bare aria-label="フレームブレンド"><Icon n="film" s={9} /></Bare>
            <Bare aria-label="モーションブラー"><Icon n="blursFill" s={10} /></Bare>
            <Bare aria-label="グラフエディター"><Icon n="graph" s={10} /></Bare>
          </TimeIcons>
        </TimeTools>
        <LayerGrid $head>
          <Cell $pad={3} $gap={2}><Icon n="eye" /><Icon n="speaker" /><Icon n="dot" s={7} /><Icon n="lock" s={7} /></Cell>
          <Cell $pad={4} $gap={6} $rule><Icon n="tag" /><span>#</span></Cell>
          <Cell $pad={17} $rule><HeadText>ソース名</HeadText></Cell>
          <Cell $pad={2} $gap={2} $rule>
            {switches.map((s) => (s === "fx" ? <Fx key={s}>fx</Fx> : <Icon key={s} n={s} />))}
          </Cell>
          <Cell $pad={3} $rule><HeadText>親とリンク</HeadText></Cell>
        </LayerGrid>
        <Clip>
          <LayerGrid $on>
            <Cell $pad={3}><Icon n="eye" /></Cell>
            <Cell $gap={2}><Icon n="chevron" s={7} /><ColorChip $c={c.violet} $s={8} /><span>1</span></Cell>
            <Cell $pad={17} $gap={3}><Icon n="star" color={c.bright} /><LayerName>シェイプレイヤー 1</LayerName></Cell>
            <Cell $pad={3} $gap={2}><Icon n="shy" /><Icon n="sun" /><Icon n="slashUp" /></Cell>
            <Cell $pad={2} $gap={4}><Icon n="whip" /><Select v="なし" w={58} label="親とリンク" /></Cell>
          </LayerGrid>
        </Clip>
        <LayerGrid>
          <Cell />
          <Cell $pad={10}><Icon n="chevronR" s={7} /></Cell>
          <Cell>コンテンツ</Cell>
          <Cell $end><Add>追加:<Icon n="circlePlay" s={8} /></Add></Cell>
          <Cell />
        </LayerGrid>
        <LayerGrid>
          <Cell />
          <Cell $pad={10}><Icon n="chevron" s={7} /></Cell>
          <Cell>トランスフォーム</Cell>
          <Cell $pad={2}><Value>リセット</Value></Cell>
          <Cell />
        </LayerGrid>
        {props.map((p) => (
          <LayerGrid key={p.name}>
            <Cell $pad={2} $gap={3}>
              {p.on && <><Icon n="left" s={6} color="#666" /><Icon n="diamond" s={8} color={c.blue} /><Icon n="right" s={6} color="#666" /></>}
            </Cell>
            <Cell />
            <Cell $pad={10} $gap={2}>
              <Icon n="watch" s={9} color={p.on ? c.blue : undefined} />
              {p.on && <Icon n="curve" s={9} />}
              <PropName $on={p.on}>{p.name}</PropName>
            </Cell>
            <Cell $pad={3}>
              {p.link && <><Icon n="link" s={8} color={c.bright} /><Gap $w={3} /></>}
              <Value>{p.value}</Value>
              {p.unit && <Unit>{p.unit}</Unit>}
            </Cell>
            <Cell $pad={12}><Icon n="whip" s={8} /></Cell>
          </LayerGrid>
        ))}
      </Outline>
      <Column>
        <Navigator><NavView /></Navigator>
        <Ruler>
          {tickLabels.map((t, i) => <Tick key={i} style={{ left: `${i * tickStep}%` }}>{t}</Tick>)}
        </Ruler>
        <WorkArea />
        <RenderedBar />
        <LayerBar />
        {[0, 1, 2, 3, 4, 5, 6].map((i) => (
          <Track key={i}>
            <KeySlot>
              {i === 3
                ? <svg width="11" height="11" viewBox="0 0 11 11"><path d="m5.500 1 4.500 4.500-4.500 4.500L1 5.500z" fill="#8da2b4" stroke={c.blue} strokeWidth="1.400" /></svg>
                : <Icon n="ibeam" s={9} />}
            </KeySlot>
          </Track>
        ))}
        <Playhead aria-hidden="true">
          <rect x="5" y="0" width="1" height="100%" fill={c.blue} />
          <path d="M1 0h9v4L5.500 8.500 1 4z" fill={c.blue} />
        </Playhead>
      </Column>
      <Rail>
        <Icon n="marker" s={9} />
        <Icon n="bin" s={9} />
        <RailThumb $h="auto" />
      </Rail>
    </Split>
    <Status $gap={4} $h={12}>
      <Bare aria-label="レイヤースイッチ"><Icon n="layers" s={9} color={c.blue} /></Bare>
      <Bare aria-label="転送制御"><Icon n="circles" /></Bare>
      <Bare aria-label="イン/アウト"><Icon n="brackets" /></Bare>
      <Bare aria-label="レンダリング時間"><Icon n="teapot" s={9} /></Bare>
      <StatusText>フレームレンダリング時間 <em>0ms</em></StatusText>
      <Mode>スイッチ / モード</Mode>
      <Icon n="hillS" s={8} color={c.bright} />
      <ZoomRange aria-label="ズーム" defaultValue={85} />
      <Icon n="hillL" s={9} color={c.bright} />
      <Pill $w={18} />
    </Status>
  </Timeline>
);

export default function App() {
  return (
    <>
      <GlobalStyle />
      <Desktop>
        <DesktopArt />
        <AppWindow>
          <TitleBar>
            <AeBadge>Ae</AeBadge>
            <Title>Adobe After Effects 2023 - C:\Storage\Develop Repository\iPentecAfterEffects\demo-spread-manual\demo-spread-manual-02.aep *</Title>
            <Captions>
              <Bare aria-label="最小化"><Icon n="min" s={8} /></Bare>
              <Bare aria-label="最大化"><Icon n="max" s={8} /></Bare>
              <Bare aria-label="閉じる"><Icon n="close" s={8} /></Bare>
            </Captions>
          </TitleBar>
          <MenuBar>{menus.map((m) => <button key={m}>{m}</button>)}</MenuBar>
          <ToolBar>
            {toolGroups.map((group, i) => (
              <ToolGroup key={i}>
                {group.map((t) => (
                  <ToolButton key={t.n} $on={t.on} $dim={t.dim} aria-label={t.l}>
                    {t.n === "text" ? <TypeGlyph>T</TypeGlyph> : <Icon n={t.n} s={11} color={t.on ? c.blue : undefined} />}
                    {t.more && <Corner />}
                  </ToolButton>
                ))}
              </ToolGroup>
            ))}
            <Gap $w={12} />
            <ToolGroup>
              <Gap $w={10} />
              <ToolButton $on $dim aria-label="ローカル軸"><Icon n="axis" s={10} color={c.blue} /></ToolButton>
              <ToolButton $dim aria-label="ワールド軸"><Icon n="axis" s={10} /></ToolButton>
              <ToolButton $dim aria-label="ビュー軸"><Icon n="axisBox" s={9} /></ToolButton>
            </ToolGroup>
            <ToolGroup $gap={3}>
              <Gap $w={1} />
              <CheckLabel><Check />スナップ</CheckLabel>
              <ToolButton aria-label="エッジにスナップ"><Icon n="snapArrow" s={9} /></ToolButton>
              <ToolButton $on aria-label="フィーチャにスナップ"><Icon n="snapBox" s={9} color={c.blue} /></ToolButton>
            </ToolGroup>
            <Gap $w={4} />
            <ToolGroup $gap={3}>
              <Blue>塗り :</Blue>
              <Swatch aria-label="塗り" />
              <Gap $w={2} />
              <Blue>線 :</Blue>
              <Swatch $stroke aria-label="線" />
              <Gap $w={1} />
              <Value>0</Value><span>px</span>
            </ToolGroup>
            <Spring />
            <PlainGroup $gap={4}>
              <Icon n="bubbles" s={12} /><span>:</span>
              <SearchField $w={123}><Icon n="magnify" s={9} /><input aria-label="ヘルプを検索" placeholder="ヘルプを検索" /></SearchField>
            </PlainGroup>
          </ToolBar>
          <Workspace>
            <ProjectPanel />
            <CompositionPanel />
            <PreviewPanel />
          </Workspace>
          <TimelinePanel />
        </AppWindow>
      </Desktop>
    </>
  );
}
